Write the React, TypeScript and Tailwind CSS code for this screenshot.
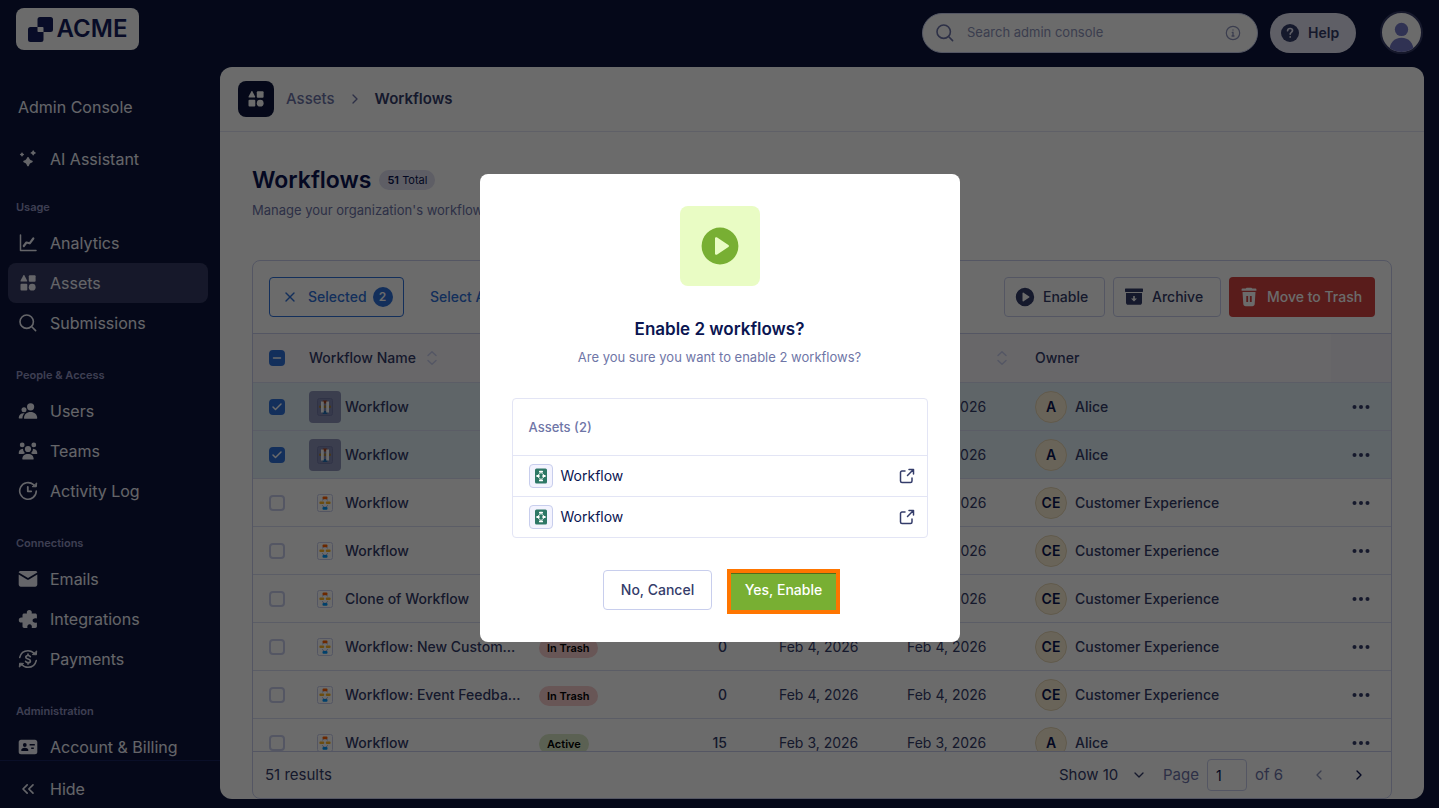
import { type ReactNode, useState } from "react";
import { Check, ChevronDown, ChevronLeft, ChevronRight, ChevronsLeft, Minus, X } from "lucide-react";

interface IconProps {
  className?: string;
}

interface NavItem {
  label: string;
  icon: ReactNode;
  active?: boolean;
}

interface NavSection {
  title: string;
  items: NavItem[];
}

interface WorkflowRow {
  id: number;
  name: string;
  status: "Active" | "In Trash" | "Disabled";
  submissions: number;
  created: string;
  updated: string;
  owner: string;
  initials: string;
}

function SparkleIcon() {
  return (
    <svg className="size-5" viewBox="0 0 20 20" fill="currentColor" aria-hidden="true">
      <path d="M10 6.4c.5 0 .8.2 1 .8.5 1.7 1.200 2.300 3 2.900.5.200.8.500.8.900s-.3.700-.8.900c-1.800.6-2.500 1.300-3 3-.2.600-.5.800-1 .800s-.8-.2-1-.8c-.5-1.700-1.200-2.400-3-3-.5-.2-.8-.5-.8-.9s.3-.7.8-.9c1.800-.6 2.500-1.200 3-2.900.200-.6.500-.8 1-.8Z" transform="translate(0 1.500)" />
      <path d="M15.200 1.300c.4 0 .5.200.700.6.300.8.600 1 1.300 1.300.4.200.6.300.6.700s-.2.500-.6.700c-.7.200-1 .5-1.300 1.200-.2.400-.3.600-.7.600s-.5-.2-.7-.6c-.3-.7-.6-1-1.300-1.200-.4-.2-.6-.3-.6-.7s.2-.5.6-.7c.7-.3 1-.5 1.300-1.300.2-.4.300-.6.700-.6Z" />
      <path d="M4 3.400c.3 0 .4.100.5.400.3.700.5.900 1.200 1.200.3.100.4.300.4.500s-.1.400-.4.500c-.7.200-.9.500-1.200 1.200-.1.300-.2.400-.5.400s-.4-.1-.5-.4c-.3-.7-.5-1-1.200-1.200-.3-.1-.4-.3-.4-.5s.1-.4.4-.5c.7-.3.900-.5 1.200-1.200.1-.3.200-.4.500-.4Z" />
    </svg>
  );
}

function AnalyticsIcon() {
  return (
    <svg className="size-5" viewBox="0 0 20 20" fill="none" stroke="currentColor" strokeLinecap="round" strokeLinejoin="round" aria-hidden="true">
      <path d="M2.500 2v15.500H18" strokeWidth="1.500" />
      <path d="m5.800 13 2.600-3.500 3.300.8 3.600-4.800" strokeWidth="2.200" />
    </svg>
  );
}

function AssetsIcon({ className = "size-5" }: IconProps) {
  return (
    <svg className={className} viewBox="0 0 20 20" fill="currentColor" aria-hidden="true">
      <path d="M5.300 2.400c.3-.5.900-.5 1.200 0l2.600 5c.3.600 0 1.200-.6 1.200H3.200c-.6 0-.9-.6-.6-1.200z" />
      <rect x="10.800" y="2.200" width="6.800" height="6.600" rx="1" />
      <rect x="2.500" y="10.800" width="6.800" height="6.800" rx="1" />
      <circle cx="14.200" cy="14.200" r="3.400" />
    </svg>
  );
}

function SearchIcon({ className = "size-5" }: IconProps) {
  return (
    <svg className={className} viewBox="0 0 20 20" fill="none" stroke="currentColor" strokeWidth="1.600" strokeLinecap="round" aria-hidden="true">
      <circle cx="8.700" cy="8.700" r="6.700" />
      <path d="m13.800 13.800 3.800 3.800" />
    </svg>
  );
}

function UsersIcon() {
  return (
    <svg className="size-5" viewBox="0 0 20 20" fill="currentColor" aria-hidden="true">
      <circle cx="12.600" cy="5.800" r="3.600" />
      <path d="M6 17.200c0-3.600 2.700-6.100 6.600-6.100s6.600 2.500 6.600 6.100c0 .3-.2.500-.5.500H6.500c-.3 0-.5-.2-.5-.5Z" />
      <circle cx="6" cy="8.700" r="2.500" />
      <path d="M6.600 12.300c-1.400 1.200-2.100 2.900-2.200 5.100H1.200c-.3 0-.5-.2-.5-.5.100-3.100 2.500-5 5.900-4.600Z" />
    </svg>
  );
}

function TeamsIcon() {
  return (
    <svg className="size-5" viewBox="0 0 20 20" fill="currentColor" aria-hidden="true">
      <circle cx="4.200" cy="3.900" r="2.400" />
      <circle cx="15.800" cy="3.900" r="2.400" />
      <circle cx="10" cy="8" r="3.100" />
      <path d="M4.300 18c0-3.100 2.300-5 5.700-5s5.700 1.900 5.700 5c0 .2-.2.400-.4.400H4.700c-.2 0-.4-.2-.4-.4Z" />
      <path d="M.7 12.300c0-2.600 1.500-4.300 4.300-4.500.2 2 .8 3.300 2 4.300-.6.500-1.400.9-2 .9H1.100c-.3 0-.4-.3-.4-.7Z" />
      <path d="M19.300 12.300c0-2.600-1.500-4.300-4.300-4.500-.2 2-.8 3.300-2 4.300.6.500 1.400.9 2 .9h3.900c.3 0 .4-.3.4-.7Z" />
    </svg>
  );
}

function ActivityIcon() {
  return (
    <svg className="size-5" viewBox="0 0 20 20" fill="none" stroke="currentColor" strokeWidth="1.600" strokeLinecap="round" strokeLinejoin="round" aria-hidden="true">
      <path d="M15.500 3.700A8.300 8.300 0 1 0 18.300 10" />
      <path d="M9.800 5.900v4.400h3.400" strokeWidth="1.800" />
      <path d="m14.600 5.700 3.700.1.400-3.500Z" fill="currentColor" strokeWidth="1" />
    </svg>
  );
}

function MailIcon() {
  return (
    <svg className="size-5" viewBox="0 0 20 20" fill="currentColor" aria-hidden="true">
      <path d="M2.600 2h14.800c1 0 1.800.7 1.900 1.600L10 8.900.7 3.600C.8 2.700 1.600 2 2.600 2Z" />
      <path d="M.7 5.600 9.400 10.700c.4.200.8.200 1.200 0l8.700-5.100v10c0 1.200-.9 2.100-2.100 2.100H2.800c-1.200 0-2.100-.9-2.100-2.100Z" />
    </svg>
  );
}

function PuzzleIcon() {
  return (
    <svg className="size-5" viewBox="0 0 20 20" fill="currentColor" aria-hidden="true">
      <path d="M8.800 3.500a2.500 2.500 0 0 1 5 0c0 .5-.1.700-.2 1h3.600c1 0 1.700.7 1.700 1.700v3.200c-2.900-.6-4.300.5-4.300 2.100s1.400 2.700 4.300 2.100v3.700c0 1-.7 1.700-1.700 1.700h-3.400c.4-2.400-.6-3.700-2.200-3.700S9 16.600 9.400 19H6.200c-1 0-1.700-.7-1.700-1.700v-3.700H3.400a2.600 2.600 0 0 1 0-5.200h1.100V6.200c0-1 .7-1.700 1.700-1.700H9c-.1-.3-.2-.6-.2-1Z" />
    </svg>
  );
}

function PaymentsIcon() {
  return (
    <svg className="size-5" viewBox="0 0 20 20" fill="none" stroke="currentColor" strokeLinecap="round" strokeLinejoin="round" aria-hidden="true">
      <path d="M1.700 8.500C2.700 4.300 6 1.700 10 1.700c2.500 0 4.700 1 6.200 2.800M18.300 11.500c-1 4.200-4.300 6.800-8.300 6.800-2.500 0-4.700-1-6.200-2.800" strokeWidth="1.500" />
      <path d="m14.800 5.600 3.600.2.300-3.500ZM5.200 14.400l-3.600-.2-.3 3.500Z" fill="currentColor" strokeWidth="1" />
      <path d="M12.300 7.700c-.4-.8-1.200-1.200-2.300-1.200-1.300 0-2.200.7-2.200 1.700 0 2.500 4.600 1.100 4.600 3.700 0 1-.9 1.700-2.400 1.700-1.200 0-2.100-.5-2.400-1.300M10 5v1.400M10 13.600V15" strokeWidth="1.700" />
    </svg>
  );
}

function AccountIcon() {
  return (
    <svg className="size-5" viewBox="0 0 20 20" fill="currentColor" aria-hidden="true">
      <path
        fillRule="evenodd"
        d="M3 2.800h14c1.300 0 2.300 1 2.300 2.300v9.800c0 1.300-1 2.300-2.300 2.300H3c-1.300 0-2.300-1-2.300-2.300V5.100c0-1.300 1-2.300 2.300-2.300Zm3.800 3.300a1.900 1.900 0 1 0 0 3.800 1.900 1.900 0 0 0 0-3.800Zm-3.600 7.300c0 .3.200.5.500.5h6.200c.3 0 .5-.2.500-.5 0-1.700-1.400-2.700-3.600-2.700s-3.600 1-3.600 2.700ZM11.600 6.900v1.500h5.200V6.900h-5.200Zm1.600 3.500v1.500h2.600v-1.500h-2.600Z"
      />
    </svg>
  );
}

function PlayIcon({ className = "size-5" }: IconProps) {
  return (
    <svg className={className} viewBox="0 0 20 20" fill="currentColor" aria-hidden="true">
      <path
        fillRule="evenodd"
        d="M10 .8a9.200 9.200 0 1 0 0 18.400A9.200 9.200 0 0 0 10 .8ZM8.600 5.800c-.5-.4-1.100-.1-1.100.5v7.400c0 .6.600.9 1.100.5l5.600-3.700c.4-.2.400-.8 0-1z"
      />
    </svg>
  );
}

function ArchiveIcon() {
  return (
    <svg className="size-5" viewBox="0 0 20 20" fill="currentColor" aria-hidden="true">
      <rect x="1" y="1.500" width="18" height="3.400" rx=".6" />
      <path fillRule="evenodd" d="M2 6h16v9.700c0 1.200-.9 2.100-2.100 2.100H4.100c-1.200 0-2.100-.9-2.100-2.100Zm7.200 3v2.400H7L10 14.600l3-3.200h-2.200V9Z" />
    </svg>
  );
}

function TrashIcon() {
  return (
    <svg className="size-5" viewBox="0 0 20 20" fill="currentColor" aria-hidden="true">
      <path d="M6.800 1.600 7.600.7h4.800l.8.900h3.400c.5 0 .8.300.8.700v1.400H2.600V2.300c0-.4.300-.7.800-.7Z" />
      <path fillRule="evenodd" d="M3.500 4.900h13l-.8 12.200c-.1 1.300-1 2.200-2.300 2.200H6.600c-1.300 0-2.200-.9-2.300-2.200ZM7.300 9v6h1.800V9Zm3.600 0v6h1.800V9Z" />
    </svg>
  );
}

function ExternalIcon() {
  return (
    <svg className="size-4" viewBox="0 0 16 16" fill="none" stroke="currentColor" strokeWidth="1.500" strokeLinecap="round" strokeLinejoin="round" aria-hidden="true">
      <path d="M6 3H3a1.500 1.500 0 0 0-1.500 1.500V13A1.500 1.500 0 0 0 3 14.500h8.500A1.500 1.500 0 0 0 13 13v-3" />
      <path d="M10 1.500h4.500V6M14.200 1.800 8.500 7.500" />
    </svg>
  );
}

function SortIcon() {
  return (
    <svg className="h-4 w-3 text-[#c8ceed]" viewBox="0 0 12 16" fill="none" stroke="currentColor" strokeWidth="1.500" strokeLinecap="round" strokeLinejoin="round" aria-hidden="true">
      <path d="M2 5.500 6 1.800l4 3.700M2 10.500l4 3.700 4-3.700" />
    </svg>
  );
}

function FlowThumb() {
  return (
    <svg className="h-5 w-4" viewBox="0 0 16 20" aria-hidden="true">
      <rect x=".5" y="1.500" width="15" height="17" rx="2" fill="#fff" stroke="#c8ceed" />
      <path d="M5 7.300 8 5l3 2.300M5 12.300 8 14.600l3-2.300" fill="none" stroke="#a9b3dd" />
      <rect x="5.500" y="3.400" width="5" height="2.800" rx="1" fill="#ff6100" />
      <rect x="2.400" y="8.500" width="4.800" height="2.600" rx="1" fill="#ffb629" />
      <rect x="8.800" y="8.500" width="4.800" height="2.600" rx="1" fill="#ffb629" />
      <rect x="5.500" y="14" width="5" height="2.800" rx="1" fill="#0099ff" />
    </svg>
  );
}

function SelectedThumb() {
  return (
    <span className="flex size-8 items-center justify-center rounded bg-[#8d93bb]">
      <svg className="h-5 w-4" viewBox="0 0 16 20" aria-hidden="true">
        <rect x=".5" y="1.500" width="15" height="17" rx="2" fill="#8289b3" stroke="#747ba8" />
        <rect x="5.500" y="3.400" width="5" height="3" rx="1" fill="#a8431f" />
        <rect x="2" y="8.500" width="12" height="2.600" rx="1" fill="#a8803a" />
        <rect x="5.500" y="14" width="5" height="3" rx="1" fill="#1f6fb5" />
        <rect x="4" y="4.500" width="2.800" height="11" fill="#fff" />
        <rect x="9.200" y="4.500" width="2.800" height="11" fill="#fff" />
      </svg>
    </span>
  );
}

function AssetThumb() {
  return (
    <span className="flex size-6 items-center justify-center rounded border border-[#c8ceed] bg-[#f3f3fe]">
      <svg className="size-4" viewBox="0 0 16 16" aria-hidden="true">
        <rect x="2" y=".5" width="12" height="15" rx="1.500" fill="#2e7866" />
        <path d="M5 7 8 4.500 11 7M5 9l3 2.500L11 9" fill="none" stroke="#fff" strokeWidth=".8" />
        <rect x="6" y="2.700" width="4" height="1.900" rx=".6" fill="#fff" />
        <rect x="3.400" y="7" width="3.200" height="2" rx=".6" fill="#fff" />
        <rect x="9.400" y="7" width="3.200" height="2" rx=".6" fill="#fff" />
        <rect x="6" y="11.400" width="4" height="1.900" rx=".6" fill="#fff" />
      </svg>
    </span>
  );
}

const sections: NavSection[] = [
  {
    title: "Usage",
    items: [
      { label: "Analytics", icon: <AnalyticsIcon /> },
      { label: "Assets", icon: <AssetsIcon />, active: true },
      { label: "Submissions", icon: <SearchIcon /> },
    ],
  },
  {
    title: "People & Access",
    items: [
      { label: "Users", icon: <UsersIcon /> },
      { label: "Teams", icon: <TeamsIcon /> },
      { label: "Activity Log", icon: <ActivityIcon /> },
    ],
  },
  {
    title: "Connections",
    items: [
      { label: "Emails", icon: <MailIcon /> },
      { label: "Integrations", icon: <PuzzleIcon /> },
      { label: "Payments", icon: <PaymentsIcon /> },
    ],
  },
  {
    title: "Administration",
    items: [{ label: "Account & Billing", icon: <AccountIcon /> }],
  },
];

const rows: WorkflowRow[] = [
  { id: 1, name: "Workflow", status: "Disabled", submissions: 0, created: "Feb 6, 2026", updated: "Feb 6, 2026", owner: "Alice", initials: "A" },
  { id: 2, name: "Workflow", status: "Disabled", submissions: 0, created: "Feb 6, 2026", updated: "Feb 6, 2026", owner: "Alice", initials: "A" },
  { id: 3, name: "Workflow", status: "Active", submissions: 0, created: "Feb 4, 2026", updated: "Feb 4, 2026", owner: "Customer Experience", initials: "CE" },
  { id: 4, name: "Workflow", status: "Active", submissions: 0, created: "Feb 4, 2026", updated: "Feb 4, 2026", owner: "Customer Experience", initials: "CE" },
  { id: 5, name: "Clone of Workflow", status: "Active", submissions: 0, created: "Feb 4, 2026", updated: "Feb 4, 2026", owner: "Customer Experience", initials: "CE" },
  { id: 6, name: "Workflow: New Custom...", status: "In Trash", submissions: 0, created: "Feb 4, 2026", updated: "Feb 4, 2026", owner: "Customer Experience", initials: "CE" },
  { id: 7, name: "Workflow: Event Feedba...", status: "In Trash", submissions: 0, created: "Feb 4, 2026", updated: "Feb 4, 2026", owner: "Customer Experience", initials: "CE" },
  { id: 8, name: "Workflow", status: "Active", submissions: 15, created: "Feb 3, 2026", updated: "Feb 3, 2026", owner: "Alice", initials: "A" },
];

const statusStyles = {
  Active: "bg-[#d9e8c5]",
  "In Trash": "bg-[#f7cccd]",
  Disabled: "bg-[#e3e5f5]",
};

interface CheckboxProps {
  label: string;
  checked: boolean;
  partial?: boolean;
  onChange: () => void;
}

function Checkbox({ label, checked, partial = false, onChange }: CheckboxProps) {
  return (
    <label className="relative block size-4">
      <input
        type="checkbox"
        aria-label={label}
        checked={checked}
        onChange={onChange}
        className="block size-4 appearance-none rounded border-2 border-[#c8ceed] checked:border-[#2e70d9] checked:bg-[#2e70d9]"
      />
      {checked && (
        <span className="pointer-events-none absolute inset-0 flex items-center justify-center text-white">
          {partial ? <Minus className="size-3" strokeWidth={3} /> : <Check className="size-3" strokeWidth={3} />}
        </span>
      )}
    </label>
  );
}

function SidebarLink({ label, icon, active = false }: NavItem) {
  return (
    <a href="#" className={`flex h-10 items-center gap-3 rounded-lg px-2.5 text-base text-[#f0f1fa] ${active ? "bg-[#363b64]" : ""}`}>
      {icon}
      {label}
    </a>
  );
}

function Sidebar() {
  return (
    <aside className="flex w-[220px] shrink-0 flex-col">
      <nav className="min-h-0 flex-1 overflow-hidden pt-7 pr-3 pl-2">
        <p className="mb-5 px-2.5 text-base text-[#f0f1fa]">Admin Console</p>
        <SidebarLink label="AI Assistant" icon={<SparkleIcon />} />
        <div className="-mt-1">
          {sections.map((section) => (
            <div key={section.title} className="pt-6">
              <h2 className="mb-2 px-2 text-[11px] leading-4 font-semibold text-[#9495c3]">{section.title}</h2>
              {section.items.map((item) => (
                <SidebarLink key={item.label} {...item} />
              ))}
            </div>
          ))}
        </div>
      </nav>
      <div className="h-12 shrink-0 border-t border-[#1a2560] px-2 pt-2">
        <button type="button" className="flex h-10 w-full items-center gap-3 px-2.5 text-base text-[#f0f1fa]">
          <ChevronsLeft className="size-5" strokeWidth={2} />
          Hide
        </button>
      </div>
    </aside>
  );
}

function TopBar() {
  return (
    <header className="flex h-[67px] shrink-0 items-start justify-between px-4 pt-2">
      <a href="#" className="flex h-[42px] w-[123px] items-center justify-center gap-1 rounded-lg bg-white text-2xl font-semibold text-[#151e5e]">
        <svg className="size-[25px]" viewBox="0 0 25 25" fill="currentColor" aria-hidden="true">
          <path fillRule="evenodd" d="M12 0h10.500A2.500 2.500 0 0 1 25 2.500v10a2.500 2.500 0 0 1-2.500 2.500H15.500v7.500A2.500 2.500 0 0 1 13 25H2.500A2.500 2.500 0 0 1 0 22.500v-10A2.500 2.500 0 0 1 2.500 10h7V2.500A2.500 2.500 0 0 1 12 0ZM9.500 10v4.200c0 .5.300.8.800.8h5.200v-4.200c0-.5-.3-.8-.8-.8Z" />
        </svg>
        ACME
      </a>
      <div className="flex items-center gap-3 pt-1">
        <label className="flex h-10 w-[336px] items-center gap-3 rounded-full border border-[#c8ceed] bg-white px-3 text-[#6c73a8]">
          <SearchIcon />
          <input type="search" aria-label="Search admin console" placeholder="Search admin console" className="min-w-0 flex-1 text-[13px] outline-none placeholder:text-[#8d93bb]" />
          <svg className="mr-1 size-4" viewBox="0 0 16 16" fill="none" stroke="#8d93bb" strokeLinecap="round" aria-hidden="true">
            <circle cx="8" cy="8" r="6.700" strokeWidth="1.200" />
            <path d="M7.200 7.300H8V11M7 11h2M8 4.900v.1" strokeWidth="1.300" />
          </svg>
        </label>
        <button type="button" className="flex h-10 w-[86px] items-center gap-2 rounded-full bg-[#e3e2f3] pl-2.5 text-sm font-semibold text-[#343c6a]">
          <svg className="size-5" viewBox="0 0 20 20" aria-hidden="true">
            <circle cx="10" cy="10" r="9" fill="currentColor" />
            <path d="M7.600 7.700c.1-1.400 1.100-2.200 2.500-2.200s2.400.8 2.400 2c0 1.800-2.300 1.800-2.300 3.600M10.200 13.900v.1" fill="none" stroke="#e3e2f3" strokeWidth="1.700" strokeLinecap="round" />
          </svg>
          Help
        </button>
        <button type="button" aria-label="Account" className="-my-px ml-3 size-[43px] overflow-hidden rounded-full border-2 border-[#353b68] bg-white">
          <svg className="size-full" viewBox="0 0 38 38" fill="#7478c6" aria-hidden="true">
            <circle cx="19" cy="16" r="6.500" />
            <path d="M7 38c0-9 5-14 12-14s12 5 12 14Z" />
          </svg>
        </button>
      </div>
    </header>
  );
}

interface AssetTableProps {
  selected: number[];
  onToggle: (id: number) => void;
}

function AssetTable({ selected, onToggle }: AssetTableProps) {
  return (
    <table className="w-full table-fixed border-collapse text-left text-sm font-medium text-[#343c6a] [&_td]:pt-0.5">
      <colgroup>
        <col className="w-14" />
        <col className="w-[214px]" />
        <col className="w-32" />
        <col className="w-28" />
        <col className="w-32" />
        <col className="w-32" />
        <col />
        <col className="w-15" />
      </colgroup>
      <thead>
        <tr className="h-12 border-b border-[#dadef3] bg-[#f8f5fb]">
          <th className="pl-4">
            <Checkbox label="Select all workflows" checked={selected.length > 0} partial onChange={() => {}} />
          </th>
          <th className="font-medium">
            <span className="flex items-center gap-2.5">Workflow Name <SortIcon /></span>
          </th>
          <th className="pl-4 font-medium">Status</th>
          <th className="pr-9 text-right font-medium">Runs</th>
          <th className="pl-4 font-medium">Created</th>
          <th className="pr-[11px] pl-4 font-medium">
            <span className="flex items-center justify-between">Edited <SortIcon /></span>
          </th>
          <th className="pl-4 font-medium">Owner</th>
          <th className="bg-[#f3f0f8]" aria-label="Actions" />
        </tr>
      </thead>
      <tbody>
        {rows.map((row) => {
          const isSelected = selected.includes(row.id);
          return (
            <tr key={row.id} className={`h-12 border-b border-[#dadef3] ${isSelected ? "bg-[#e2f0f8]" : ""}`}>
              <td className="pl-4">
                <Checkbox label={`Select ${row.name}`} checked={isSelected} onChange={() => onToggle(row.id)} />
              </td>
              <td>
                <span className="flex items-center gap-1">
                  <span className="flex w-8 shrink-0 justify-center">{isSelected ? <SelectedThumb /> : <FlowThumb />}</span>
                  <span className="whitespace-nowrap">{row.name}</span>
                </span>
              </td>
              <td className="pl-4">
                <span className={`inline-block rounded-full px-2 text-[11px] leading-5 font-semibold text-black ${statusStyles[row.status]}`}>{row.status}</span>
              </td>
              <td className="pr-9 text-right">{row.submissions}</td>
              <td className="pl-4 font-normal">{row.created}</td>
              <td className="pl-4 font-normal">{row.updated}</td>
              <td className="pl-4">
                <span className="flex items-center gap-2">
                  <span className="flex size-8 items-center justify-center rounded-full border border-[#e6d6b4] bg-[#fbefd5] font-semibold text-[#0a1551]">{row.initials}</span>
                  {row.owner}
                </span>
              </td>
              <td>
                <button type="button" aria-label="More actions" className="mx-auto block">
                  <svg className="size-5" viewBox="0 0 20 20" fill="currentColor" aria-hidden="true">
                    <circle cx="3.500" cy="10" r="2" />
                    <circle cx="10" cy="10" r="2" />
                    <circle cx="16.500" cy="10" r="2" />
                  </svg>
                </button>
              </td>
            </tr>
          );
        })}
      </tbody>
    </table>
  );
}

function Pagination() {
  return (
    <div className="flex h-[47px] shrink-0 items-center justify-between border-t border-[#c8ceed] pr-6 pl-3 text-[15px] font-normal text-[#343c6a]">
      <span>51 results</span>
      <div className="flex items-center text-[#6c73a8]">
        <label className="relative flex items-center text-[#343c6a]">
          <select aria-label="Rows per page" defaultValue="10" className="w-[88px] appearance-none outline-none">
            <option value="10">Show 10</option>
            <option value="25">Show 25</option>
          </select>
          <ChevronDown className="pointer-events-none absolute right-0 size-4" strokeWidth={2} />
        </label>
        <label className="ml-4 flex items-center gap-2">
          Page
          <input type="text" defaultValue="1" className="h-8 w-10 rounded border border-[#c8ceed] pl-2 text-sm text-[#0a1551] outline-none" />
        </label>
        <span className="ml-2">of 6</span>
        <button type="button" aria-label="Previous page" className="ml-7 text-[#8d93bb]">
          <ChevronLeft className="size-4" />
        </button>
        <button type="button" aria-label="Next page" className="ml-6 text-[#0a1551]">
          <ChevronRight className="size-4" />
        </button>
      </div>
    </div>
  );
}

interface ConfirmDialogProps {
  count: number;
  onClose: () => void;
}

function ConfirmDialog({ count, onClose }: ConfirmDialogProps) {
  return (
    <div className="fixed inset-0 z-50 flex items-center justify-center bg-black/58 pt-2" role="presentation">
      <div role="dialog" aria-modal="true" aria-labelledby="confirm-title" className="w-full max-w-[480px] rounded-lg bg-white p-8 text-sm">
        <div className="mx-auto flex size-20 items-center justify-center rounded-lg bg-[#e9fcc4] text-[#78af33]">
          <PlayIcon className="size-10" />
        </div>
        <h2 id="confirm-title" className="mt-8 text-center text-[17px] leading-[22px] font-semibold text-[#0a1551]">
          Enable {count} workflows?
        </h2>
        <p className="mt-1 text-center text-[13px] leading-[26px] text-[#6f76a7]">Are you sure you want to enable {count} workflows?</p>

        <div className="mt-7 rounded border border-[#e3e5f5]">
          <h3 className="px-4 py-[18px] text-[13px] leading-5 font-medium text-[#6f76a7]">Assets ({count})</h3>
          <ul>
            {Array.from({ length: count }, (_, i) => (
              <li key={i} className="flex h-[41px] items-center gap-2 border-t border-[#e3e5f5] pr-3 pl-4 text-[#0a1551]">
                <AssetThumb />
                Workflow
                <a href="#" aria-label="Open workflow" className="ml-auto text-[#343c6a]">
                  <ExternalIcon />
                </a>
              </li>
            ))}
          </ul>
        </div>

        <div className="mt-8 flex items-end justify-center gap-[19px] font-medium">
          <button type="button" onClick={onClose} className="h-10 w-[109px] rounded border border-[#c8ceed] text-[#343c6a]">
            No, Cancel
          </button>
          <button type="button" onClick={onClose} className="h-[37px] w-[105px] border-t border-[#4f6d1c] bg-[#78af33] pb-1 text-white outline-4 outline-[#ff7500]">
            Yes, Enable
          </button>
        </div>
      </div>
    </div>
  );
}

export default function App() {
  const [selected, setSelected] = useState<number[]>([1, 2]);
  const [confirmOpen, setConfirmOpen] = useState(true);

  function toggle(id: number) {
    setSelected((prev) => (prev.includes(id) ? prev.filter((v) => v !== id) : [...prev, id]));
  }

  return (
    <div className="flex h-screen flex-col overflow-hidden bg-[#0c153c] font-['Inter',sans-serif]">
      <TopBar />
      <div className="flex min-h-0 flex-1">
        <Sidebar />
        <main className="mr-[15px] mb-[9px] flex min-w-0 flex-1 flex-col overflow-hidden rounded-xl bg-white">
          <div className="flex h-[65px] shrink-0 items-center gap-3 border-b border-[#e3e5f5] px-[18px] text-[15px] font-medium">
            <span className="flex size-9 items-center justify-center rounded-lg bg-[#0c153c] text-white">
              <AssetsIcon />
            </span>
            <a href="#" className="text-[#6c73a8]">Assets</a>
            <ChevronRight className="size-4 text-[#6c73a8]" />
            <span className="font-semibold text-[#343c6a]">Workflows</span>
          </div>

          <div className="flex min-h-0 flex-1 flex-col px-8 pt-8">
            <div className="flex items-center gap-2">
              <h1 className="text-[23px] leading-8 font-semibold text-[#0a1551]">Workflows</h1>
              <span className="rounded-full bg-[#e0dff0] px-2 text-[11px] leading-5 text-[#0a1551]">
                <b className="font-semibold">51</b> Total
              </span>
            </div>
            <p className="mt-1 text-[13px] leading-5 text-[#6c73a8]">Manage your organization's workflows</p>

            <div className="mt-10 flex min-h-0 flex-1 flex-col overflow-hidden rounded-lg border border-[#c8ceed] text-sm font-medium">
              <div className="flex h-[73px] shrink-0 items-center justify-between border-b border-[#c8ceed] px-4">
                <div className="flex items-center gap-[26px] text-[#2e70d9]">
                  <button type="button" onClick={() => setSelected([])} className="flex h-10 w-[135px] items-center rounded border border-[#2e70d9] pl-3">
                    <X className="size-4" strokeWidth={2} />
                    <span className="ml-2.5">Selected</span>
                    <span className="ml-1.5 flex size-5 items-center justify-center rounded-full bg-[#2e70d9] text-xs font-semibold text-white">{selected.length}</span>
                  </button>
                  <button type="button" onClick={() => setSelected(rows.map((row) => row.id))}>Select All</button>
                </div>
                <div className="flex gap-2 text-[#343c6a]">
                  <button type="button" onClick={() => setConfirmOpen(true)} className="flex h-10 w-[101px] items-center gap-2 rounded border border-[#c8ceed] pl-2.5">
                    <PlayIcon />
                    Enable
                  </button>
                  <button type="button" className="flex h-10 w-[108px] items-center gap-2 rounded border border-[#c8ceed] pl-2.5">
                    <ArchiveIcon />
                    Archive
                  </button>
                  <button type="button" className="flex h-10 w-[146px] items-center gap-2 rounded bg-[#d44340] pl-2.5 text-white">
                    <TrashIcon />
                    Move to Trash
                  </button>
                </div>
              </div>
              <div className="min-h-0 flex-1 overflow-hidden">
                <AssetTable selected={selected} onToggle={toggle} />
              </div>
              <Pagination />
            </div>
          </div>
        </main>
      </div>
      {confirmOpen && <ConfirmDialog count={selected.length} onClose={() => setConfirmOpen(false)} />}
    </div>
  );
}
